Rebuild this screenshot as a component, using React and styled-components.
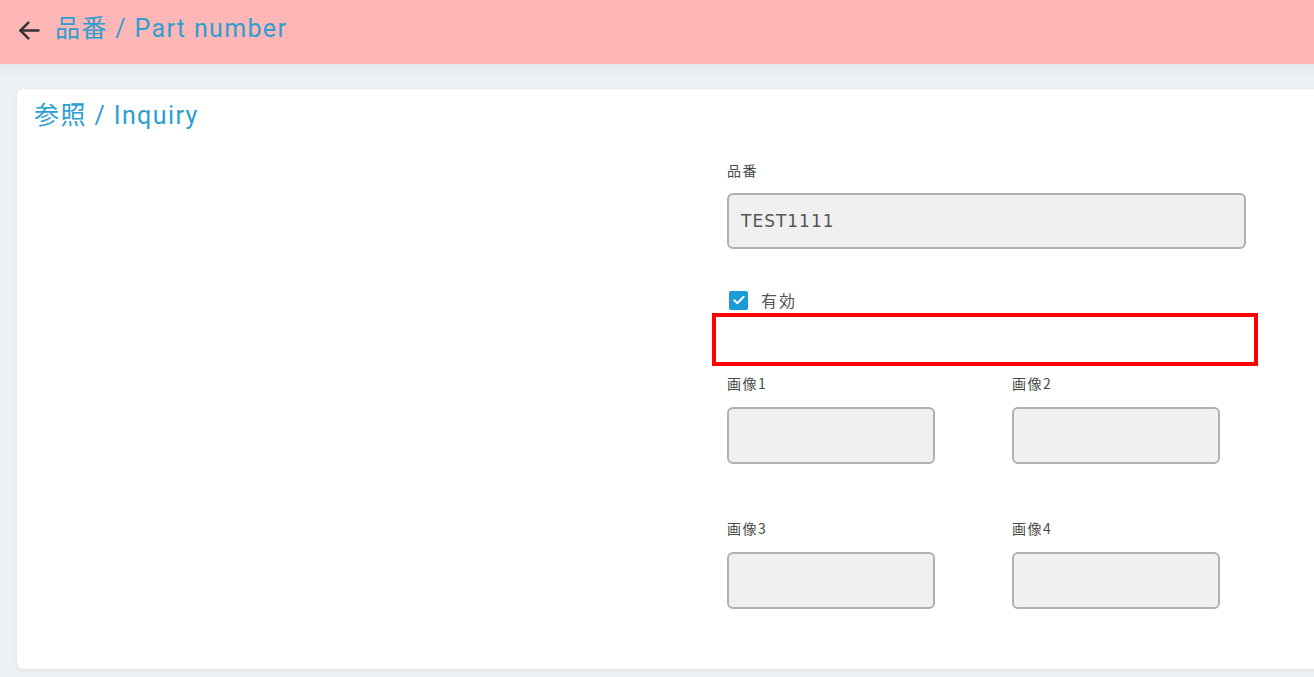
import React from "react";
import styled, { createGlobalStyle } from "styled-components";

const GlobalStyle = createGlobalStyle`
  * { box-sizing: border-box; }
  html, body {
    margin: 0;
    padding: 0;
    background: #edf1f4;
    font-family: Roboto, "Noto Sans CJK JP", sans-serif;
  }
`;

const images = ["画像1", "画像2", "画像3", "画像4"];

const App = () => {
  return (
    <Page>
      <GlobalStyle />
      <Header>
        <BackButton aria-label="back">
          <svg width="27" height="27" viewBox="0 0 24 24" fill="none" stroke="#333" strokeWidth="2.2" strokeLinecap="round" strokeLinejoin="round">
            <path d="M20 12H4" />
            <path d="M11 5l-7 7 7 7" />
          </svg>
        </BackButton>
        <HeaderTitle>品番 / Part number</HeaderTitle>
      </Header>
      <Main>
        <Card>
          <CardTitle>参照 / Inquiry</CardTitle>
          <FormColumn>
            <Label>品番</Label>
            <TextBox>TEST1111</TextBox>
            <CheckRow>
              <CheckBox>
                <svg width="14" height="14" viewBox="0 0 24 24" fill="none" stroke="#fff" strokeWidth="3.4" strokeLinecap="round" strokeLinejoin="round">
                  <path d="M4 12.5l5 5L20 6.5" />
                </svg>
              </CheckBox>
              <CheckLabel>有効</CheckLabel>
            </CheckRow>
            <Highlight />
            <ImageGrid>
              {images.map((name) => (
                <ImageField key={name}>
                  <Label>{name}</Label>
                  <ImageBox />
                </ImageField>
              ))}
            </ImageGrid>
          </FormColumn>
        </Card>
      </Main>
    </Page>
  );
};

const Page = styled.div`
  width: 100%;
  min-height: 677px;
  overflow: hidden;
`;

const Header = styled.header`
  height: 64px;
  background: #ffb6b6;
  display: flex;
  align-items: center;
  gap: 12px;
  padding: 0 0 4px 16px;
`;

const BackButton = styled.div`
  width: 27px;
  height: 27px;
  display: flex;
  align-items: center;
  justify-content: center;
`;

const HeaderTitle = styled.h1`
  margin: 0 0 2px;
  font-size: 25px;
  line-height: 30px;
  font-weight: 400;
  color: #2c9fd0;
  letter-spacing: 1.35px;
`;

const Main = styled.main`
  padding: 25px 0 8px 17px;
  background: linear-gradient(#e4e9ee 0, #edf1f4 14px);
`;

const Card = styled.section`
  margin-right: -12px;
  background: #fff;
  border-radius: 6px;
  box-shadow: 0 1px 4px rgba(0, 0, 0, 0.08);
  padding: 12px 17px 60px;
`;

const CardTitle = styled.h2`
  margin: 0;
  font-size: 25px;
  line-height: 30px;
  font-weight: 400;
  color: #2c9fd0;
  letter-spacing: 1.4px;
`;

const FormColumn = styled.div`
  margin: 30px 0 0 693px;
  width: 519px;
  display: flex;
  flex-direction: column;
`;

const Label = styled.div`
  font-family: "Noto Sans CJK JP", sans-serif;
  font-size: 14px;
  line-height: 18px;
  color: #4a4a4a;
  letter-spacing: 1.5px;
`;

const TextBox = styled.div`
  margin-top: 14px;
  height: 56px;
  background: #f0f0f0;
  border: 2px solid #b0b0b0;
  border-radius: 6px;
  display: flex;
  align-items: center;
  padding: 0 12px;
  font-family: "DejaVu Sans", sans-serif;
  font-size: 17px;
  color: #555;
  letter-spacing: 1px;
`;

const CheckRow = styled.div`
  margin-top: 41px;
  height: 20px;
  display: flex;
  align-items: center;
  gap: 13px;
  padding-left: 2px;
`;

const CheckBox = styled.span`
  width: 19px;
  height: 19px;
  border-radius: 2px;
  background: #1a9ad6;
  display: flex;
  align-items: center;
  justify-content: center;
`;

const CheckLabel = styled.span`
  font-family: "Noto Sans CJK JP", sans-serif;
  font-size: 16px;
  color: #555;
  letter-spacing: 2px;
`;

const Highlight = styled.div`
  margin: 3px 0 0 -15px;
  width: 546px;
  height: 53px;
  border: 4px solid #ff0000;
`;

const ImageGrid = styled.div`
  margin-top: 8px;
  display: grid;
  grid-template-columns: 285px 285px;
  row-gap: 55px;
`;

const ImageField = styled.div`
  display: flex;
  flex-direction: column;
  gap: 15px;
`;

const ImageBox = styled.div`
  width: 208px;
  height: 57px;
  background: #f0f0f0;
  border: 2px solid #b0b0b0;
  border-radius: 6px;
`;

export default App;
